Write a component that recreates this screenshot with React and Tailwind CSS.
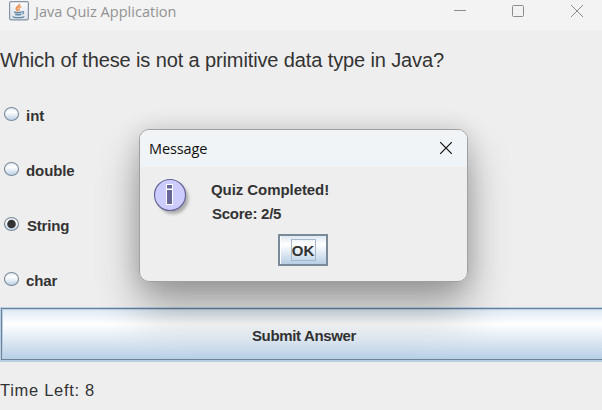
import React from 'react';

function JavaCup() {
  return (
    <svg width="20" height="20" viewBox="0 0 20 20" fill="none">
      <defs>
        <linearGradient id="tile" x1="0" y1="0" x2="0" y2="1">
          <stop offset="0" stopColor="#fcfcfc" />
          <stop offset="1" stopColor="#dbe1e8" />
        </linearGradient>
      </defs>
      <rect x="0.6" y="0.6" width="18.8" height="18.3" rx="1.6" fill="url(#tile)" stroke="#8395a8" strokeWidth="1.2" />
      <path d="M10.300 3c1 2-2.900 2.700-2.900 4.500 0 1 .8 1.700 1.600 2.500" stroke="#eb9152" strokeWidth="1.900" />
      <path d="M12.300 5.500c-1.800.7-2.900 1.400-2.400 2.400.5.900.5 1.300-.2 2" stroke="#ef9f68" strokeWidth="1.500" />
      <path d="M5.200 11c1.800.7 5.300.7 7.400 0M6.200 13.200c1.500.6 4.300.6 6 0" stroke="#6288a6" strokeWidth="1.500" />
      <path d="M13 10.600c2.200-.4 2.400 1.700-.2 2.600M4 15.200c-.5 1.900 9.800 2.100 11.200.1" stroke="#6288a6" strokeWidth="1.200" />
    </svg>
  );
}

function Radio({ checked }) {
  return (
    <svg width="16" height="16" viewBox="0 0 16 16">
      <defs>
        <linearGradient id="radio" x1="0" y1="0" x2="0" y2="1">
          <stop offset="0" stopColor="#dfe9f4" />
          <stop offset="0.35" stopColor="#ffffff" />
          <stop offset="1" stopColor="#b8cfe5" />
        </linearGradient>
      </defs>
      <ellipse cx="7.500" cy="8" rx="7" ry="6.500" fill="url(#radio)" stroke="#7a8a99" strokeWidth="1.100" />
      {checked && <circle cx="7.500" cy="8" r="4.300" fill="#333333" />}
    </svg>
  );
}

function Option({ label, checked, text }) {
  return (
    <div className="flex h-[55px] items-center pl-[4px]">
      <span className="mb-[1px]"><Radio checked={checked} /></span>
      <span className={`mt-[3px] text-[15px] leading-5 font-bold ${text}`}>{label}</span>
    </div>
  );
}

function InfoIcon() {
  return (
    <svg width="40" height="40" viewBox="0 0 40 40">
      <defs>
        <filter id="soft" x="-20%" y="-20%" width="150%" height="150%">
          <feGaussianBlur stdDeviation="1.500" />
        </filter>
      </defs>
      <circle cx="20" cy="20.500" r="15.500" fill="#777777" opacity="0.55" filter="url(#soft)" />
      <circle cx="17" cy="17" r="15.500" fill="#ccccff" stroke="#666699" strokeWidth="1.200" />
      <path d="M13 6h7v5h-7zM13 11h7v16h-7z" fill="#ffffff" />
      <path d="M14 7h5v3.500h-5zM14 12h5v14h-5z" fill="#666699" />
    </svg>
  );
}

function Dialog() {
  return (
    <div className="absolute left-[139px] top-[129px] h-[153px] w-[329px] overflow-visible rounded-[10px] shadow-[0_26px_44px_rgba(0,0,0,0.31),0_2px_24px_rgba(0,0,0,0.16)]">
      <div className="flex h-full flex-col overflow-hidden rounded-[10px] border border-[#a0a0a0] bg-[#eeeeee]">
        <div className="flex h-[37px] shrink-0 items-center justify-between bg-[#f0f4f6] pl-[9px] pr-[15px]">
          <span className="font-['Open_Sans',sans-serif] text-[14.500px] tracking-[-0.100px] text-[#111111]">Message</span>
          <svg className="-mt-[1px]" width="12" height="12" viewBox="0 0 12 12" stroke="#111111" strokeWidth="1.200"><path d="M0 0l12 12M12 0L0 12" /></svg>
        </div>
        <div className="flex pl-[13px] pt-[11px]">
          <InfoIcon />
          <div className="pl-[18px] text-[15px] leading-6 font-bold">
            <div className="tracking-[-0.070px]">Quiz Completed!</div>
            <div className="pl-[1px] tracking-[-0.250px]">Score: 2/5</div>
          </div>
        </div>
        <button className="ml-[138px] mt-[8px] flex h-[32px] w-[50px] items-center justify-center border-2 border-[#7a8a99] bg-[linear-gradient(#dde8f3,#ffffff_30%,#b8cfe5)] shadow-[inset_1px_0_0_#ffffff]">
          <span className="flex h-[22px] w-[25px] items-center justify-center border border-[#a3b8cc] pt-[3px] text-[15px] font-bold">OK</span>
        </button>
      </div>
    </div>
  );
}

export default function App() {
  return (
    <div className="relative flex h-[410px] w-[602px] flex-col overflow-hidden bg-[#eeeeee] font-['Liberation_Sans',Arial,sans-serif] text-[#333333]">
      <header className="flex h-[30px] shrink-0 items-center bg-[#f3f3f3] pl-[9px] pr-[19px]">
        <div className="mt-[-9px] h-[20px]"><JavaCup /></div>
        <span className="mt-[-6px] ml-[6px] font-['Open_Sans',sans-serif] text-[14.500px] tracking-[0.020px] text-[#929292]">Java Quiz Application</span>
        <svg className="mt-[-8px] ml-auto" width="129" height="14" viewBox="0 0 129 14" fill="none" stroke="#8c8c8c">
          <path d="M0 6.500h12M117 1l12 12M129 1l-12 12" />
          <rect x="58.500" y="1.500" width="11" height="11" rx="1" />
        </svg>
      </header>
      <h1 className="flex h-[57px] shrink-0 items-center pt-[3px] text-[20px] tracking-[-0.120px] whitespace-nowrap">Which of these is not a primitive data type in Java?</h1>
      <div className="h-[220px] shrink-0">
        <Option label="int" text="ml-[6px]" />
        <Option label="double" text="ml-[6px] tracking-[-0.100px]" />
        <Option label="String" checked text="ml-[7px] tracking-[-0.200px]" />
        <Option label="char" text="ml-[6px] tracking-[-0.150px]" />
      </div>
      <button className="flex h-[55px] w-[604px] shrink-0 border border-b-2 border-[#b8cfe5]">
        <span className="flex h-full w-full items-center justify-center border border-[#6f8396] bg-[linear-gradient(#dde8f3,#ffffff_30%,#b8cfe5)] pt-[4px] pl-[4px] text-[15px] tracking-[-0.350px] font-bold shadow-[inset_1px_1px_0_#b8cfe5]">Submit Answer</span>
      </button>
      <div className="flex h-[48px] items-center pt-[9px] text-[16.500px] tracking-[0.700px]">Time Left: 8</div>
      <Dialog />
    </div>
  );
}
